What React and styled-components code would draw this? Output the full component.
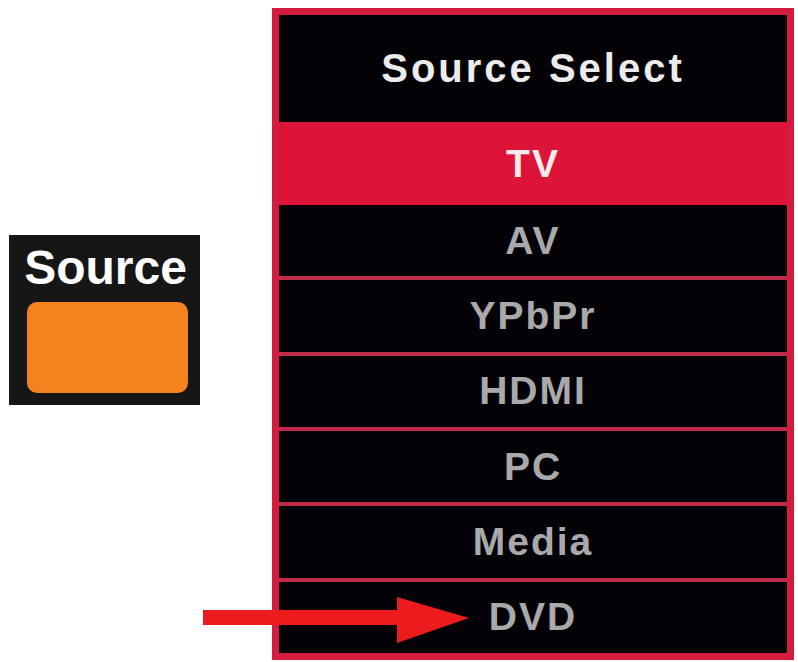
import React from "react"
import styled, { createGlobalStyle } from "styled-components"

const sources = ["TV", "AV", "YPbPr", "HDMI", "PC", "Media", "DVD"]
const current = "TV"

function App() {
  return (
    <>
      <GlobalStyle />
      <Stage>
        <SourceKey>
          <KeyLabel>Source</KeyLabel>
          <KeyButton />
        </SourceKey>

        <Menu>
          <MenuTitle>Source Select</MenuTitle>
          {sources.map((name) => (
            <MenuItem key={name} $active={name === current}>
              {name}
            </MenuItem>
          ))}
        </Menu>

        <Pointer width="266" height="46" viewBox="0 0 266 46">
          <path d="M0 13 H194 V0 L266 21 L194 46 V28 H0 Z" fill="#ec1b1e" />
        </Pointer>
      </Stage>
    </>
  )
}

const GlobalStyle = createGlobalStyle`
  html, body {
    margin: 0;
    background: #ffffff;
  }
  body {
    font-family: "Liberation Sans", Arial, sans-serif;
  }
`

const Stage = styled.div`
  position: relative;
  display: flex;
  align-items: flex-start;
  gap: 72px;
  width: 798px;
  height: 662px;
  padding: 8px 0 0 9px;
  box-sizing: border-box;
  overflow: hidden;
`

const SourceKey = styled.div`
  margin-top: 227px;
  width: 191px;
  height: 170px;
  box-sizing: border-box;
  padding: 6px 12px 12px 18px;
  background: #171616;
  display: flex;
  flex-direction: column;
  align-items: center;
`

const KeyLabel = styled.div`
  font-size: 48px;
  font-weight: 700;
  line-height: 54px;
  color: #ffffff;
  margin-left: -4px;
`

const KeyButton = styled.div`
  margin-top: auto;
  width: 100%;
  height: 91px;
  border-radius: 10px;
  background: #f5821f;
`

const Menu = styled.div`
  width: 522px;
  height: 652px;
  box-sizing: border-box;
  border: 7px solid #d41c3e;
  background: #040207;
  display: flex;
  flex-direction: column;
`

const MenuTitle = styled.div`
  height: 107px;
  flex: none;
  display: flex;
  align-items: center;
  justify-content: center;
  font-size: 40px;
  font-weight: 700;
  letter-spacing: 3px;
  color: #ececec;
`

const MenuItem = styled.div`
  flex: ${({ $active }) => ($active ? "0 0 83px" : "1 1 0")};
  display: flex;
  align-items: center;
  justify-content: center;
  font-size: 39px;
  font-weight: 700;
  letter-spacing: 2px;
  color: ${({ $active }) => ($active ? "#f6eaea" : "#a9a9ab")};
  background: ${({ $active }) => ($active ? "#dc1437" : "transparent")};

  & + & {
    border-top: ${({ $active }) => ($active ? "none" : "4px solid #be2a4a")};
  }

  &:nth-child(3) {
    border-top: none;
  }
`

const Pointer = styled.svg`
  position: absolute;
  left: 203px;
  top: 597px;
`

export default App
